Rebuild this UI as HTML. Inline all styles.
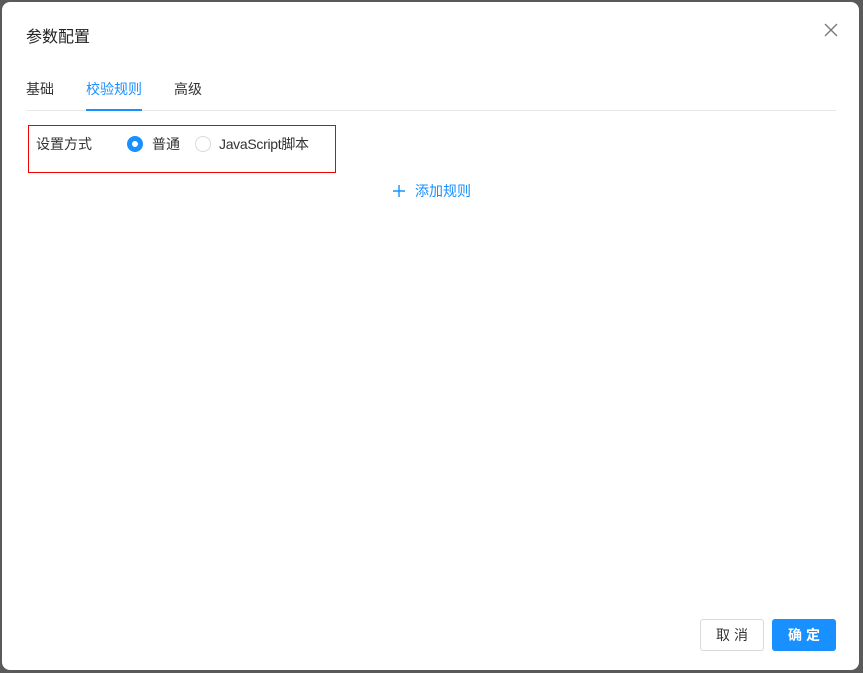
<!DOCTYPE html>
<html><head><meta charset="utf-8"><style>
body{margin:0;width:863px;height:673px;background:#5a5a5a;position:relative;overflow:hidden;font-family:"Liberation Sans","Noto Sans CJK SC",sans-serif;}
.m{position:absolute;left:2px;top:2px;width:857px;height:668px;background:#fff;border-radius:8px;}
.a{position:absolute;white-space:nowrap;}
</style></head><body>
<div class="m"></div>
<div class="a" style="left:26px;top:23px;font-size:16px;color:#222;">参数配置</div>
<svg class="a" style="left:823px;top:22px" width="16" height="16"><path d="M2 2L14 14M14 2L2 14" stroke="#777" stroke-width="1.3"/></svg>
<div class="a" style="left:26px;top:79px;font-size:14px;color:#333;">基础</div>
<div class="a" style="left:86px;top:79px;font-size:14px;color:#1890ff;">校验规则</div>
<div class="a" style="left:174px;top:79px;font-size:14px;color:#333;">高级</div>
<div class="a" style="left:26px;top:110px;width:810px;height:1px;background:#e8e8e8"></div>
<div class="a" style="left:86px;top:109px;width:56px;height:2px;background:#1890ff"></div>
<div class="a" style="left:28px;top:125px;width:306px;height:46px;border:1px solid #e00;"></div>
<div class="a" style="left:36px;top:134px;font-size:14px;color:#333;">设置方式</div>
<div class="a" style="left:127px;top:136px;width:6px;height:6px;border:5px solid #1890ff;border-radius:50%;background:#fff"></div>
<div class="a" style="left:152px;top:134px;font-size:14px;color:#333;">普通</div>
<div class="a" style="left:195px;top:136px;width:14px;height:14px;border:1px solid #d9d9d9;border-radius:50%;"></div>
<div class="a" style="left:219px;top:134px;font-size:14px;color:#333;letter-spacing:-0.3px">JavaScript脚本</div>
<svg class="a" style="left:392px;top:184px" width="14" height="14"><path d="M7 1V13M1 7H13" stroke="#1890ff" stroke-width="1.4"/></svg>
<div class="a" style="left:415px;top:181px;font-size:14px;color:#1890ff;">添加规则</div>
<div class="a" style="left:700px;top:619px;width:62px;height:30px;border:1px solid #d9d9d9;border-radius:3px;font-size:14px;color:#333;text-align:center;line-height:30px;letter-spacing:4px;text-indent:4px">取消</div>
<div class="a" style="left:772px;top:619px;width:64px;height:32px;background:#1890ff;border-radius:3px;font-size:14px;color:#fff;text-align:center;line-height:32px;letter-spacing:4px;text-indent:4px;font-weight:bold">确定</div>
</body></html>
